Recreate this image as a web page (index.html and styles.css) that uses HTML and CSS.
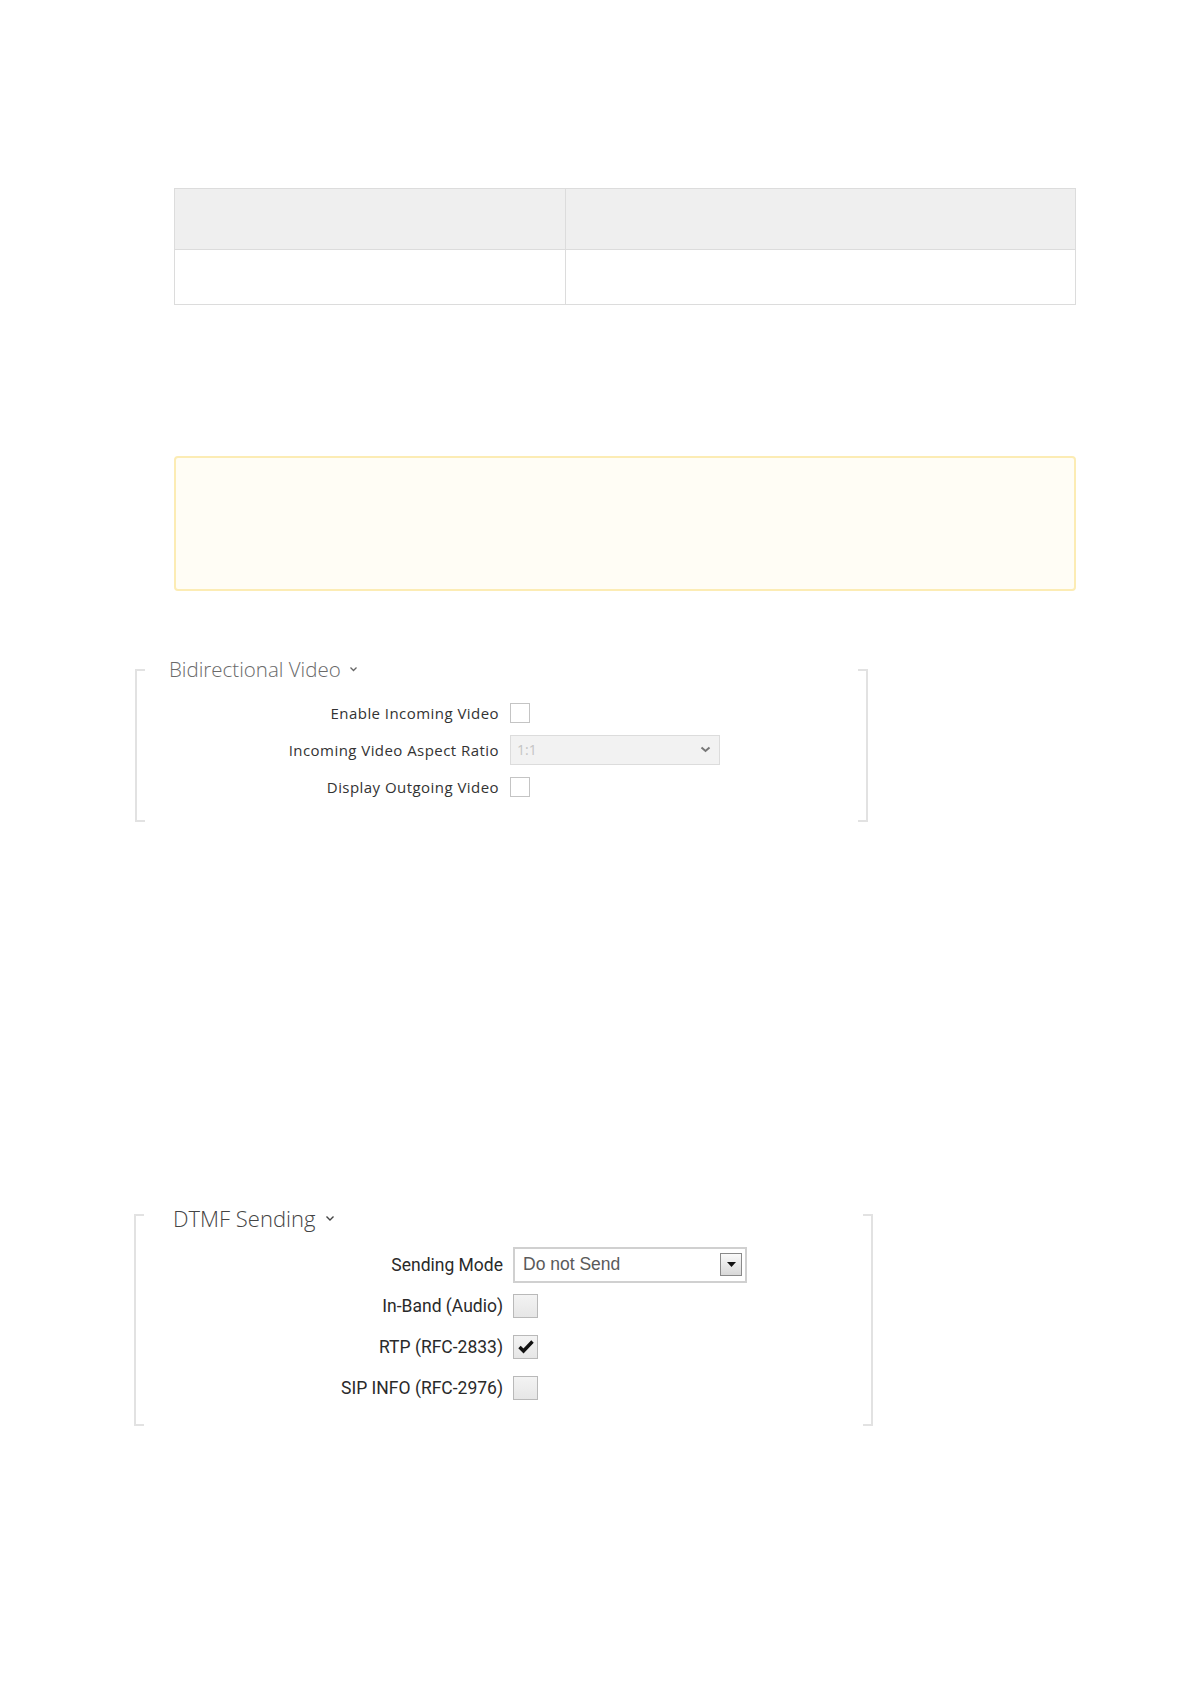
FILE: index.html
```html
<!DOCTYPE html>
<html lang="en">
<head>
    <meta charset="UTF-8">
    <meta name="viewport" content="width=device-width, initial-scale=1.0">
    <title>Intercom - Video and DTMF</title>
    <link rel="stylesheet" href="styles.css">
</head>
<body>
    <div class="page">
        <!-- empty parameter table -->
        <table class="grid">
            <thead>
                <tr>
                    <th class="col-name"></th>
                    <th></th>
                </tr>
            </thead>
            <tbody>
                <tr>
                    <td></td>
                    <td></td>
                </tr>
            </tbody>
        </table>

        <!-- warning box -->
        <div class="notice"></div>

        <!-- Bidirectional Video -->
        <section class="group group-video">
            <h2 class="group-title">Bidirectional Video
                <svg class="chev" width="9" height="6" viewBox="0 0 9 6"><path d="M1.5 1.5 L4.5 4.5 L7.5 1.5" fill="none" stroke="#666" stroke-width="1.3"/></svg>
            </h2>
            <div class="fields">
                <label class="field-label">Enable Incoming Video</label>
                <div><span class="check"></span></div>

                <label class="field-label">Incoming Video Aspect Ratio</label>
                <div class="select is-disabled">
                    <span class="select-value">1:1</span>
                    <svg width="11" height="7" viewBox="0 0 11 7"><path d="M1.5 1.5 L5.5 5 L9.5 1.5" fill="none" stroke="#777" stroke-width="2"/></svg>
                </div>

                <label class="field-label">Display Outgoing Video</label>
                <div><span class="check"></span></div>
            </div>
        </section>

        <!-- DTMF Sending -->
        <section class="group group-dtmf">
            <h2 class="group-title">DTMF Sending
                <svg class="chev" width="10" height="7" viewBox="0 0 10 7"><path d="M1.5 1.5 L5 5 L8.5 1.5" fill="none" stroke="#444" stroke-width="1.4"/></svg>
            </h2>
            <div class="fields">
                <label class="field-label">Sending Mode</label>
                <div class="select">
                    <span class="select-value">Do not Send</span>
                    <span class="drop-btn"><svg width="9" height="5" viewBox="0 0 9 5"><path d="M0 0 L9 0 L4.5 5 Z" fill="#111"/></svg></span>
                </div>

                <label class="field-label">In-Band (Audio)</label>
                <div><span class="check"></span></div>

                <label class="field-label">RTP (RFC-2833)</label>
                <div><span class="check is-checked">
                    <svg width="18" height="15" viewBox="0 0 18 15"><path d="M2.5 8 L6.5 12 L15.5 2.5" fill="none" stroke="#111" stroke-width="3.4"/></svg>
                </span></div>

                <label class="field-label">SIP INFO (RFC-2976)</label>
                <div><span class="check"></span></div>
            </div>
        </section>
    </div>
</body>
</html>
```

FILE: styles.css
```css
body {
    margin: 0;
    background-color: #fff;
    font-family: 'Open Sans', sans-serif;
    color: #333;
}

.page {
    width: 1191px;
    padding-top: 188px;
    padding-bottom: 200px;
}

/* table */
.grid {
    margin-left: 174px;
    width: 902px;
    border-collapse: collapse;
}

.grid th,
.grid td {
    border: 1px solid #dcdcdc;
    padding: 0;
}

.grid th {
    height: 60px;
    background-color: #efefef;
}

.grid td {
    height: 54px;
}

.grid .col-name {
    width: 390px;
}

/* notice */
.notice {
    margin: 151px 0 0 174px;
    width: 898px;
    height: 131px;
    border: 2px solid #fcecb4;
    border-radius: 4px;
    background-color: #fffdf5;
}

/* bracketed groups */
.group {
    display: flex;
    flex-direction: column;
    box-sizing: border-box;
    border-left: 2px solid #e2e2e2;
    border-right: 2px solid #e2e2e2;
    background-image:
        linear-gradient(#e2e2e2, #e2e2e2),
        linear-gradient(#e2e2e2, #e2e2e2),
        linear-gradient(#e2e2e2, #e2e2e2),
        linear-gradient(#e2e2e2, #e2e2e2);
    background-repeat: no-repeat;
    background-size: 8px 2px;
    background-position: left top, left bottom, right top, right bottom;
}

.group-title {
    margin: 0;
    font-weight: 300;
    display: flex;
    align-items: center;
    gap: 8px;
}

.fields {
    display: grid;
    align-items: center;
}

.field-label {
    text-align: right;
    white-space: nowrap;
}

.check {
    display: block;
    box-sizing: border-box;
}

.select {
    display: flex;
    align-items: center;
    justify-content: space-between;
    box-sizing: border-box;
}

/* video group */
.group-video {
    margin: 78px 0 0 135px;
    width: 733px;
    padding-bottom: 17px;
}

.group-video .group-title {
    margin-top: -15px;
    padding-left: 32px;
    height: 30px;
    font-family: 'Open Sans', sans-serif;
    font-size: 20.5px;
    color: #6a6a6a;
}

.group-video .fields {
    margin-top: 10px;
    grid-template-columns: 362px auto;
    column-gap: 11px;
    grid-auto-rows: 37px;
}

.group-video .field-label {
    font-size: 15px;
    letter-spacing: 0.45px;
    color: #333;
}

.group-video .check {
    width: 20px;
    height: 20px;
    border: 1px solid #c4c4c4;
    background-color: #fff;
}

.group-video .select {
    width: 210px;
    height: 30px;
    padding: 0 8px 0 6px;
    border: 1px solid #dcdcdc;
    background-color: #f2f2f2;
}

.group-video .select-value {
    font-size: 14px;
    color: #c4c4c4;
}

/* dtmf group */
.group-dtmf {
    margin: 392px 0 0 134px;
    width: 739px;
    padding-bottom: 18px;
}

.group-dtmf .group-title {
    margin-top: -12px;
    padding-left: 37px;
    height: 32px;
    font-family: 'Open Sans', sans-serif;
    font-size: 22px;
    color: #444;
    gap: 10px;
}

.group-dtmf .fields {
    margin-top: 10px;
    grid-template-columns: 367px auto;
    column-gap: 10px;
    grid-auto-rows: 41px;
}

.group-dtmf .field-label {
    font-family: 'Roboto', sans-serif;
    font-size: 17.5px;
    color: #2a2a2a;
}

.group-dtmf .check {
    width: 25px;
    height: 24px;
    border: 1px solid #b9b9b9;
    background: linear-gradient(#f3f3f3, #e6e6e6);
    display: flex;
    align-items: center;
    justify-content: center;
}

.group-dtmf .select {
    width: 234px;
    height: 36px;
    padding: 0 3px 0 8px;
    border: 2px solid #d0d0d0;
    background-color: #fff;
}

.group-dtmf .select-value {
    font-family: 'Liberation Sans', Arial, sans-serif;
    font-size: 17.5px;
    color: #5a5a5a;
}

.drop-btn {
    width: 22px;
    height: 23px;
    box-sizing: border-box;
    border: 1px solid #8a8a8a;
    background: linear-gradient(#fafafa, #d8d8d8);
    display: flex;
    align-items: center;
    justify-content: center;
}
```
